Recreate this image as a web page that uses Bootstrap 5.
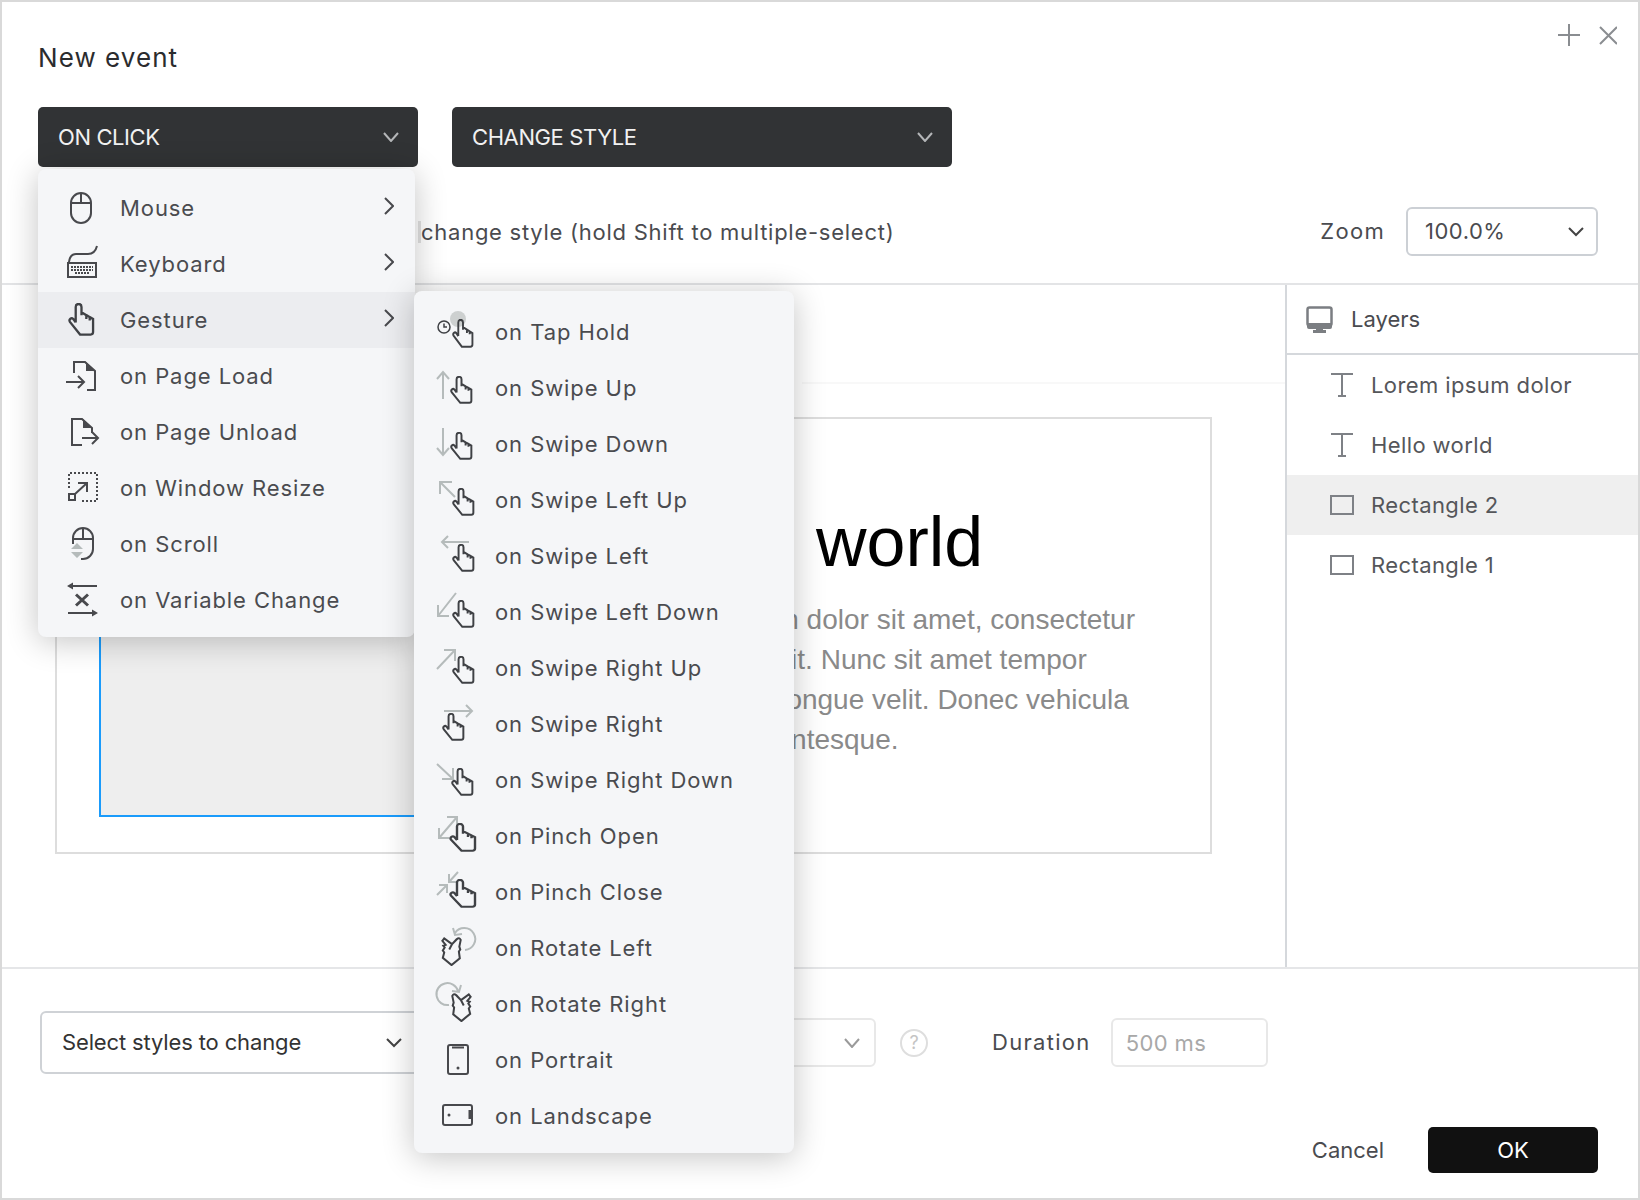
<!DOCTYPE html>
<html lang="en">
<head>
  <meta charset="UTF-8" />
  <title>New event</title>
  <link href="https://cdn.jsdelivr.net/npm/bootstrap@5.3.2/dist/css/bootstrap.min.css" rel="stylesheet">
  <style>
    body { margin: 0; background: #fff; font-family: "Inter", "Noto Sans", sans-serif; font-size: 22px; color: #4a4b4f; }
    .evt-window { width: 1640px; height: 1200px; border: 2px solid #d9d9d9; background: #fff; overflow: hidden; }
    .evt-head { height: 283px; padding: 41px 40px 0 36px; border-bottom: 2px solid #e3e4e6; flex: none; }
    .evt-title { font-size: 26px; line-height: 30px; color: #2b2c2e; height: 30px; letter-spacing: 1.05px; }
    .evt-dark { height: 60px; background: #313335; color: #f1f1f1; border: 0; border-radius: 5px; padding: 0 19px 0 20px; font-size: 22px; letter-spacing: -.4px; }
    .evt-dark:hover, .evt-dark:active { background: #313335 !important; color: #f1f1f1 !important; }
    .evt-dark-a { width: 380px; }
    .evt-dark-b { width: 500px; margin-left: 34px; }
    .evt-hint { margin-left: 380px; border-left: 3px solid #e2e2e2; line-height: 22px; letter-spacing: .74px; }
    .evt-zoom-lbl { margin-right: 21px; letter-spacing: 1.3px; }
    .evt-sel { height: 49px; width: 192px; background: #fff; border: 2px solid #ccd0d5; border-radius: 6px; padding: 0 12px 0 17px; color: #4a4b4f; font-size: 22px; letter-spacing: .5px; }
    .evt-corner { position: absolute; top: 20px; right: 21px; }
    .evt-main { height: 682px; flex: none; }
    .evt-canvas { position: relative; overflow: hidden; }
    .evt-ruler { height: 99px; border-bottom: 2px solid #f8f8f8; margin-left: 800px; }
    .evt-board { position: absolute; left: 53px; top: 132px; width: 1157px; height: 437px; border: 2px solid #dddddd; font-family: "Liberation Sans", Arial, sans-serif; }
    .evt-shape { position: absolute; left: 42px; top: 60px; width: 690px; height: 338px; background: #eeeeee; border: 2px solid #1a9bfb; }
    .evt-copy { position: absolute; left: 580px; top: 83px; white-space: nowrap; }
    .evt-copy h1 { font-size: 70px; line-height: 80px; margin: 0 0 18px; color: #000; font-weight: 400; font-family: inherit; }
    .evt-copy p { font-size: 28px; line-height: 40px; margin: 0; color: #8a8a8a; }
    .evt-panel { width: 353px; flex: none; border-left: 2px solid #d5d8dc; }
    .evt-panel-head { height: 70px; border-bottom: 2px solid #d5d8dc; padding-left: 19px; gap: 18px; }
    .evt-layer { height: 60px; padding: 0 0 0 43px; gap: 17px; border: 0; color: #55565a; display: flex; align-items: center; letter-spacing: .4px; }
    .evt-layer.picked { background: #efefef; }
    .evt-foot { height: 232px; flex: none; border-top: 2px solid #e5e6e8; padding: 42px 40px 0 38px; }
    .evt-foot-row { height: 63px; }
    .evt-styles { width: 382px; height: 63px; background: #fff; border: 2px solid #cfd2d6; border-radius: 6px; padding: 0 18px 0 20px; color: #333; font-size: 22px; letter-spacing: -.14px; }
    .evt-easing { width: 434px; height: 49px; margin-left: 20px; background: #fff; border: 2px solid #e8e8e8; border-radius: 6px; padding: 0 14px; }
    .evt-help { width: 28px; height: 28px; margin-left: 24px; border: 2px solid #dedede; border-radius: 50%; color: #c4c4c4; font-size: 18px; line-height: 1; }
    .evt-dur-lbl { margin-left: 64px; color: #4a4b4f; letter-spacing: 1.3px; }
    .form-control.evt-dur { width: 157px; height: 49px; margin-left: 20px; border: 2px solid #e8e8e8; border-radius: 6px; padding: 0 13px; font-size: 22px; color: #a8a8a8; box-shadow: none; letter-spacing: .4px; }
    .evt-actions { margin-top: 53px; gap: 44px; }
    .evt-cancel { color: #4a4b4f; font-size: 22px; padding: 0; border: 0; }
    .evt-ok { width: 170px; height: 46px; background: #111; color: #fff; border: 0; border-radius: 5px; font-size: 22px; padding: 0; }
    .evt-ok:hover { background: #111; color: #fff; }
    .dropdown-menu.evt-menu { display: block; border: 0; border-radius: 8px; background: #f5f6f8; box-shadow: 0 4px 32px rgba(0,0,0,.24); margin: 0; font-size: 22px; min-width: 0; }
    .evt-menu-a { left: 36px; top: 167px; width: 377px; padding: 11px 0 9px; }
    .evt-menu-b { left: 412px; top: 289px; width: 380px; padding: 13px 0 9px; }
    .evt-menu svg { overflow: visible; }
    .evt-menu .dropdown-item { height: 56px; color: #4a4b4f; display: flex; align-items: center; letter-spacing: .92px; }
    .evt-menu .dropdown-item.active, .evt-menu .dropdown-item:hover { background: #ecedf0; color: #4a4b4f; }
    .evt-menu-a .dropdown-item { padding: 0 21px 0 26px; gap: 16px; }
    .evt-menu-b .dropdown-item { padding: 0 0 0 20px; gap: 13px; }
    .evt-caret { margin-left: auto; margin-top: -4px; }
    .ic, .ic-grey, .ic-bold, .ic-dots { fill: none; }
    .ic { stroke: #48494d; stroke-width: 2; }
    .ic-bold { stroke: #48494d; stroke-width: 3; }
    .ic-grey { stroke: #b5bbbb; stroke-width: 2; }
    .ic-dots { stroke: #48494d; stroke-width: 2; stroke-dasharray: 2 2; }
    .ic-fill { fill: #48494d; stroke: none; }
    .ic-tint { fill: #b5bbbb; stroke: none; }
  </style>
</head>
<body>
  <svg width="0" height="0" class="position-absolute">
    <symbol id="hand" viewBox="0 0 28 34" preserveAspectRatio="none">
      <path fill="none" stroke="#3f4145" stroke-width="2.400" d="M8 20V4a3 3 0 0 1 6 0v8.500M14 9.500l5 3v4M19 12.500l3.500 2v3.500M22.500 14.500l3.500 2V30q0 2.500-2.500 2.500H12.500L2 19.500Q.8 17.500 2.500 16.200 4 15 5.500 16.500L8 20"/>
    </symbol>
    <symbol id="vhand" viewBox="0 0 24 31" preserveAspectRatio="none">
      <path fill="none" stroke="#3f4145" stroke-width="2.200" d="M1.500 5 3.500 2.500 12 8.500 17 3.500Q20 1 21.500 4L20 11 21 14 19.500 16 20.500 23 11.500 30 2 22.500 3.500 17 2 15 4 12 2.500 10 5 9ZM9 14 12 8.500"/>
    </symbol>
    <symbol id="chev-r" viewBox="0 0 10 18">
      <path fill="none" stroke="#48494d" stroke-width="2" d="M1 1l8 8-8 8"/>
    </symbol>
  </svg>

  <div class="evt-window position-relative d-flex flex-column">
    <!-- top of the dialog -->
    <div class="evt-head">
      <div class="evt-title">New event</div>
      <svg class="evt-corner" width="64" height="26" viewBox="0 0 64 26">
        <path fill="none" stroke="#8a8d91" stroke-width="2" d="M16 2v22M5 13h22M47 5l17 17M64 5L47 22"/>
      </svg>
      <div class="d-flex" style="margin-top:34px">
        <button class="btn evt-dark evt-dark-a d-flex align-items-center justify-content-between">ON CLICK
          <svg width="16" height="10" viewBox="0 0 16 10"><path fill="none" stroke="#b4b6b8" stroke-width="2" d="M1 1l7 8 7-8"/></svg>
        </button>
        <button class="btn evt-dark evt-dark-b d-flex align-items-center justify-content-between">CHANGE STYLE
          <svg width="16" height="10" viewBox="0 0 16 10"><path fill="none" stroke="#b4b6b8" stroke-width="2" d="M1 1l7 8 7-8"/></svg>
        </button>
      </div>
      <div class="d-flex align-items-center" style="margin-top:40px;height:49px">
        <div class="evt-hint">change style (hold Shift to multiple-select)</div>
        <div class="evt-zoom-lbl ms-auto">Zoom</div>
        <button class="btn evt-sel d-flex align-items-center justify-content-between">100.0%
          <svg width="16" height="10" viewBox="0 0 16 10"><path fill="none" stroke="#444" stroke-width="2" d="M1 1l7 7 7-7"/></svg>
        </button>
      </div>
    </div>

    <!-- canvas and layers -->
    <div class="evt-main d-flex">
      <div class="evt-canvas flex-grow-1">
        <div class="evt-ruler"></div>
        <div class="evt-board">
          <div class="evt-shape"></div>
          <div class="evt-copy">
            <h1>Hello world</h1>
            <p>Lorem ipsum dolor sit amet, consectetur<br>adipiscing elit. Nunc sit amet tempor<br>ipsum sed congue velit. Donec vehicula<br>tempor pellentesque.</p>
          </div>
        </div>
      </div>
      <div class="evt-panel">
        <div class="evt-panel-head d-flex align-items-center">
          <svg width="27" height="27" viewBox="0 0 27 27"><rect x="1.500" y="1.500" width="24" height="18" rx="2" fill="none" stroke="#7b7e82" stroke-width="2.500"/><path fill="#7b7e82" d="M1 17h25v4a2 2 0 0 1-2 2H3a2 2 0 0 1-2-2zM10 22h7v2h3v3H7v-3h3z"/></svg>
          <span>Layers</span>
        </div>
        <div class="list-group list-group-flush">
          <div class="list-group-item evt-layer bg-transparent">
            <svg width="24" height="24" viewBox="0 0 24 24"><path fill="none" stroke="#7e8186" stroke-width="2" d="M1 1h22M12 1v22M8 23h8"/></svg>Lorem ipsum dolor</div>
          <div class="list-group-item evt-layer bg-transparent">
            <svg width="24" height="24" viewBox="0 0 24 24"><path fill="none" stroke="#7e8186" stroke-width="2" d="M1 1h22M12 1v22M8 23h8"/></svg>Hello world</div>
          <div class="list-group-item evt-layer picked">
            <svg width="24" height="20" viewBox="0 0 24 20"><rect x="1" y="1" width="22" height="18" fill="none" stroke="#7e8186" stroke-width="2"/></svg>Rectangle 2</div>
          <div class="list-group-item evt-layer bg-transparent">
            <svg width="24" height="20" viewBox="0 0 24 20"><rect x="1" y="1" width="22" height="18" fill="none" stroke="#7e8186" stroke-width="2"/></svg>Rectangle 1</div>
        </div>
      </div>
    </div>

    <!-- bottom settings -->
    <div class="evt-foot">
      <div class="evt-foot-row d-flex align-items-center">
        <button class="btn evt-styles d-flex align-items-center justify-content-between">Select styles to change
          <svg width="16" height="10" viewBox="0 0 16 10"><path fill="none" stroke="#444" stroke-width="2" d="M1 1l7 7 7-7"/></svg>
        </button>
        <div class="evt-easing d-flex align-items-center justify-content-end">
          <svg width="16" height="10" viewBox="0 0 16 10"><path fill="none" stroke="#9a9a9a" stroke-width="2" d="M1 1l7 8 7-8"/></svg>
        </div>
        <div class="evt-help d-flex align-items-center justify-content-center">?</div>
        <div class="evt-dur-lbl">Duration</div>
        <input class="form-control evt-dur" value="500 ms" readonly>
      </div>
      <div class="evt-actions d-flex justify-content-end align-items-center">
        <button class="btn evt-cancel">Cancel</button>
        <button class="btn evt-ok">OK</button>
      </div>
    </div>

    <!-- first level menu -->
    <div class="dropdown-menu evt-menu evt-menu-a">
      <a class="dropdown-item" href="#"><svg width="40" height="40" viewBox="0 0 40 40"><path class="ic" d="M7 15a10 10 0 0 1 20 0v10a10 10 0 0 1-20 0zM17 5v10M7 15h20"/></svg>Mouse<svg class="evt-caret" width="10" height="18"><use href="#chev-r"/></svg></a>
      <a class="dropdown-item" href="#"><svg width="40" height="40" viewBox="0 0 40 40"><rect class="ic" x="4" y="19" width="28" height="14"/><path class="ic" d="M5 18Q6 10 12 10H24Q31 10 33 2"/><path class="ic" stroke-dasharray="2 1" d="M7 23h22M7 26h22M11 29h14"/></svg>Keyboard<svg class="evt-caret" width="10" height="18"><use href="#chev-r"/></svg></a>
      <a class="dropdown-item active" href="#"><svg width="40" height="40" viewBox="0 0 40 40"><use href="#hand" x="4" y="3" width="27" height="33"/></svg>Gesture<svg class="evt-caret" width="10" height="18"><use href="#chev-r"/></svg></a>
      <a class="dropdown-item" href="#"><svg width="40" height="40" viewBox="0 0 40 40"><path class="ic" d="M10 17V6H21L31 15V34H23M2 26H20M14 20l6 6-6 6"/><path class="ic-fill" d="M22 6l9 9h-9z"/></svg>on Page Load</a>
      <a class="dropdown-item" href="#"><svg width="40" height="40" viewBox="0 0 40 40"><path class="ic" d="M18 33H8V7H18L28 16V21M18 26H34M28 20l6 6-6 6"/><path class="ic-fill" d="M19 7l9 9h-9z"/></svg>on Page Unload</a>
      <a class="dropdown-item" href="#"><svg width="40" height="40" viewBox="0 0 40 40"><path class="ic-dots" d="M5 20V5H33V33H18"/><rect class="ic" x="5" y="26" width="6" height="6"/><path class="ic" d="M11 26 23 15M14 15h9v9"/></svg>on Window Resize</a>
      <a class="dropdown-item" href="#"><svg width="40" height="40" viewBox="0 0 40 40"><path class="ic" d="M9 20V14a10 10 0 0 1 20 0v11a10 10 0 0 1-10 10h-2M19 4v11M9 15h20"/><path class="ic-tint" d="M13 19l6 6H7zM13 34l6-6H7z"/></svg>on Scroll</a>
      <a class="dropdown-item" href="#"><svg width="40" height="40" viewBox="0 0 40 40"><path class="ic" d="M6 6H33M4 33H31"/><path class="ic-fill" d="M9 2.500 3 6l6 3.500zM28 29.500 34 33l-6 3.500z"/><path class="ic-bold" d="M12 14.500l12 11M24 14.500l-12 11"/></svg>on Variable Change</a>
    </div>

    <!-- gesture submenu -->
    <div class="dropdown-menu evt-menu evt-menu-b">
      <a class="dropdown-item" href="#"><svg width="48" height="40" viewBox="0 0 48 40"><circle cx="24" cy="7" r="8" fill="#cdd0d0"/><use href="#hand" x="18" y="7" width="22" height="29"/><circle cx="10" cy="15" r="6" fill="#f5f6f8" stroke="#3f4145" stroke-width="1.500"/><path fill="none" stroke="#3f4145" stroke-width="1.500" d="M10 11.500V15h3"/></svg>on Tap Hold</a>
      <a class="dropdown-item" href="#"><svg width="48" height="40" viewBox="0 0 48 40"><path class="ic-grey" d="M9 31V4M3 11l6-7 6 7"/><use href="#hand" x="16" y="8" width="23" height="28"/></svg>on Swipe Up</a>
      <a class="dropdown-item" href="#"><svg width="48" height="40" viewBox="0 0 48 40"><path class="ic-grey" d="M9 4V31M3 24l6 7 6-7"/><use href="#hand" x="16" y="8" width="23" height="28"/></svg>on Swipe Down</a>
      <a class="dropdown-item" href="#"><svg width="48" height="40" viewBox="0 0 48 40"><path class="ic-grey" d="M21 17 6 2M6 14V2H18"/><use href="#hand" x="18" y="8" width="23" height="28"/></svg>on Swipe Left Up</a>
      <a class="dropdown-item" href="#"><svg width="48" height="40" viewBox="0 0 48 40"><path class="ic-grey" d="M35 6H8M14 0 8 6l6 6"/><use href="#hand" x="18" y="8" width="23" height="28"/></svg>on Swipe Left</a>
      <a class="dropdown-item" href="#"><svg width="48" height="40" viewBox="0 0 48 40"><path class="ic-grey" d="M22 1 4 24M4 13V24H15"/><use href="#hand" x="18" y="8" width="23" height="28"/></svg>on Swipe Left Down</a>
      <a class="dropdown-item" href="#"><svg width="48" height="40" viewBox="0 0 48 40"><path class="ic-grey" d="M3 21 21 2M10 2H21V13"/><use href="#hand" x="18" y="8" width="23" height="28"/></svg>on Swipe Right Up</a>
      <a class="dropdown-item" href="#"><svg width="48" height="40" viewBox="0 0 48 40"><path class="ic-grey" d="M10 7H38M32 1l6 6-6 6"/><use href="#hand" x="8" y="9" width="23" height="28"/></svg>on Swipe Right</a>
      <a class="dropdown-item" href="#"><svg width="48" height="40" viewBox="0 0 48 40"><path class="ic-grey" d="M3 4 19 19M19 8V19H8"/><use href="#hand" x="17" y="8" width="23" height="28"/></svg>on Swipe Right Down</a>
      <a class="dropdown-item" href="#"><svg width="48" height="40" viewBox="0 0 48 40"><path class="ic-grey" d="M5 22 23 1M5 12V22H15M13 1H23V11"/><use href="#hand" x="15" y="7" width="28" height="29"/></svg>on Pinch Open</a>
      <a class="dropdown-item" href="#"><svg width="48" height="40" viewBox="0 0 48 40"><path class="ic-grey" d="M3 23 13 13M5 13h8v8M24 0 15 10M15 2v8h8"/><use href="#hand" x="15" y="7" width="28" height="29"/></svg>on Pinch Close</a>
      <a class="dropdown-item" href="#"><svg width="48" height="40" viewBox="0 0 48 40"><path class="ic-grey" d="M31 22A11 11 0 1 0 21 5M19 0l2 7 7-1"/><use href="#vhand" x="7" y="8" width="22" height="30"/></svg>on Rotate Left</a>
      <a class="dropdown-item" href="#"><svg width="48" height="40" viewBox="0 0 48 40"><path class="ic-grey" d="M15 21A11 11 0 1 1 24 7M27 1l-2 7-7-1"/><g transform="translate(38 8) scale(-1 1)"><use href="#vhand" width="22" height="30"/></g></svg>on Rotate Right</a>
      <a class="dropdown-item" href="#"><svg width="48" height="40" viewBox="0 0 48 40"><rect class="ic" x="14" y="5" width="20" height="29" rx="2"/><path class="ic" d="M18 7.500h12"/><circle class="ic-fill" cx="24" cy="28" r="1.500"/></svg>on Portrait</a>
      <a class="dropdown-item" href="#"><svg width="48" height="40" viewBox="0 0 48 40"><rect class="ic" x="9" y="9" width="29" height="20" rx="2"/><path class="ic-bold" d="M36 14v9"/><circle class="ic-fill" cx="15" cy="19" r="1.500"/></svg>on Landscape</a>
    </div>
  </div>
  <script src="https://cdn.jsdelivr.net/npm/bootstrap@5.3.2/dist/js/bootstrap.bundle.min.js"></script>
</body>
</html>
